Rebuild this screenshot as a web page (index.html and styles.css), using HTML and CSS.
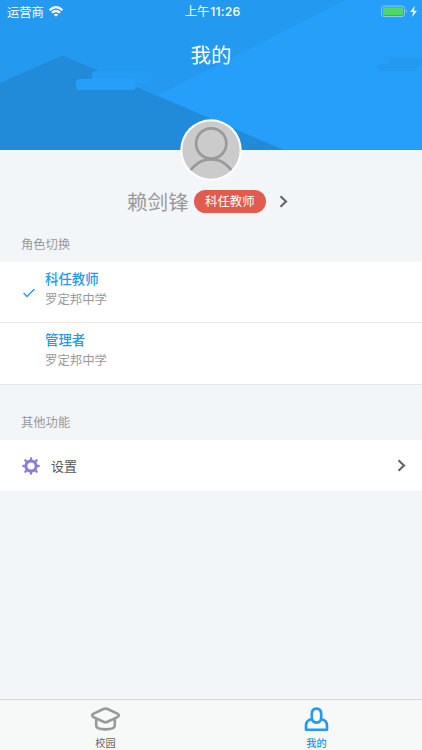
FILE: index.html
```
<!DOCTYPE html>
<html lang="zh-CN">
<head>
<meta charset="utf-8">
<title>我的</title>
<link rel="stylesheet" href="styles.css">
</head>
<body>
<div class="screen">
  <header class="hero">
    <svg class="scenery" viewBox="0 0 422 150" preserveAspectRatio="none" aria-hidden="true">
      <rect width="422" height="150" fill="#2499f0"/>
      <path d="M345 0H422V150H280L158 95Z" fill="#259ff9"/>
      <path d="M0 83L59 57Q62 55 66 57L284 150H0Z" fill="#218bda"/>
      <rect x="92" y="71" width="59" height="12" rx="4" fill="#259cf4"/>
      <rect x="76" y="79" width="60" height="11" rx="4" fill="#259ff9"/>
      <path d="M390 58H422V65H419Q418 71 415 71H380Q377 71 377 68T380 64H389V60Q389 58 390 58Z" fill="#2499f0"/>
    </svg>
    <div class="status">
      <div class="carrier">
        <span>运营商</span>
        <svg width="14" height="11" viewBox="0 0 14 11" fill="none" stroke="#fff" stroke-width="2.2">
          <path d="M.6 4.1Q7-1.7 13.4 4.1"/>
          <path d="M3 6.8Q7 3.2 11 6.8"/>
          <path d="M7 10.8L4.8 8.6Q7 6.8 9.2 8.6Z" fill="#fff" stroke="none"/>
        </svg>
      </div>
      <div class="clock">上午<span>11:26</span></div>
      <svg class="battery" width="37" height="13" viewBox="0 0 37 13">
        <rect x=".5" y="1" width="23" height="10.5" rx="2.5" fill="none" stroke="#8bc9f8"/>
        <rect x="2" y="2.5" width="20" height="7.5" rx="1" fill="#4cd964"/>
        <path d="M25 4.5Q27 6.2 25 8Z" fill="#8bc9f8"/>
        <path d="M33.8 .8L29.2 7H32L31.2 12.2L35.8 5.7H32.9Z" fill="#fff"/>
      </svg>
    </div>
    <h1 class="title">我的</h1>
  </header>

  <section class="profile">
    <svg class="avatar" width="62" height="62" viewBox="0 0 62 62">
      <defs><clipPath id="face"><circle cx="31" cy="31" r="28.5"/></clipPath></defs>
      <circle cx="31" cy="31" r="30.7" fill="#fff"/>
      <circle cx="31" cy="31" r="28.7" fill="#cbcbcb"/>
      <g clip-path="url(#face)" fill="none" stroke="#999" stroke-width="2.7">
        <circle cx="31.2" cy="24.5" r="15.1"/>
        <path d="M8 54.5C15 45 21 40.4 31 40.4S47 45 54 54.5"/>
      </g>
    </svg>
    <div class="identity">
      <span class="name">赖剑锋</span>
      <span class="badge">科任教师</span>
      <svg class="chevron" width="9" height="13" viewBox="0 0 9 13"><path d="M1.5 1.2L7 6.5L1.5 11.8"/></svg>
    </div>
  </section>

  <h2 class="section-title roles-title">角色切换</h2>
  <div class="role">
    <svg class="check" width="12" height="10" viewBox="0 0 12 10"><path d="M.6 5L4 8.5L11.5 1"/></svg>
    <div class="role-text"><strong>科任教师</strong><span>罗定邦中学</span></div>
  </div>
  <div class="role">
    <div class="role-text"><strong>管理者</strong><span>罗定邦中学</span></div>
  </div>

  <h2 class="section-title other-title">其他功能</h2>
  <div class="setting">
    <svg width="18" height="18" viewBox="-9 -9 18 18" fill="none" stroke="#8c7bdb">
      <circle r="5.1" stroke-width="3"/>
      <path stroke-width="2.3" stroke-linecap="round" d="M0-6V-7.7M0 6V7.7M-6 0H-7.7M6 0H7.7M4.3-4.3L5.7-5.7M4.3 4.3L5.7 5.7M-4.3 4.3L-5.7 5.7M-4.3-4.3L-5.7-5.7"/>
    </svg>
    <span>设置</span>
    <svg class="chevron" width="9" height="13" viewBox="0 0 9 13"><path d="M1.5 1.2L7 6.5L1.5 11.8"/></svg>
  </div>

  <nav class="tabs">
    <div class="tab">
      <svg width="30" height="26" viewBox="0 0 30 26" fill="none" stroke="#999" stroke-width="2.6" stroke-linejoin="round">
        <path d="M12.4 2Q14.5 1.2 16.6 2L26.4 6.6Q29.3 8.3 26.4 10.1L16.6 14.7Q14.5 15.6 12.4 14.7L2.6 10.1Q-.3 8.3 2.6 6.6Z"/>
        <path d="M5.2 11.6V18.6Q5.2 22.4 14.5 22.4T23.8 18.6V11.6"/>
      </svg>
      <span>校园</span>
    </div>
    <div class="tab active">
      <svg width="30" height="26" viewBox="0 0 30 26" fill="none" stroke="#2499f0" stroke-width="2.6" stroke-linejoin="round">
        <path d="M14.5 1.6C11.2 1.6 9.8 3.8 9.8 7V10C9.8 13.4 11.5 15.6 14.5 15.6S19.2 13.4 19.2 10V7C19.2 3.8 17.8 1.6 14.5 1.6Z"/>
        <path d="M9.9 12.3C6.1 12.8 4 15.2 4 18.8V22.7H25V18.8C25 15.2 22.9 12.8 19.1 12.3"/>
      </svg>
      <span>我的</span>
    </div>
  </nav>
</div>
</body>
</html>
```
FILE: styles.css
```
* {
  box-sizing: border-box;
}

body {
  margin: 0;
  font-family: "Noto Sans CJK SC", sans-serif;
}

svg {
  display: block;
  flex: none;
}

.screen {
  display: flex;
  flex-direction: column;
  width: 422px;
  height: 750px;
  overflow: hidden;
  background: #f3f6f8;
}

.hero {
  position: relative;
  flex: none;
  height: 150px;
  color: #fff;
}

.scenery {
  position: absolute;
  inset: 0;
  width: 100%;
  height: 100%;
}

.status {
  position: relative;
  display: grid;
  grid-template-columns: 1fr auto 1fr;
  align-items: center;
  height: 22px;
  padding: 0 4px 0 7px;
  font-size: 12.3px;
  line-height: 22px;
}

.carrier {
  display: flex;
  align-items: center;
  gap: 5px;
}

.clock span {
  margin-left: 1px;
  font-family: Inter, sans-serif;
  font-weight: 500;
  letter-spacing: 0.15px;
}

.battery {
  justify-self: end;
}

.title {
  position: relative;
  margin: 16px 0 0;
  font-size: 20.4px;
  font-weight: 400;
  line-height: 32px;
  text-align: center;
}

.profile {
  position: relative;
  flex: none;
  height: 111px;
  margin-top: -31px;
}

.avatar {
  margin: 0 auto;
}

.identity {
  display: flex;
  align-items: center;
  height: 30px;
  margin-top: 5px;
  padding-left: 127px;
}

.name {
  color: #999;
  font-size: 20.6px;
  line-height: 30px;
}

.badge {
  width: 72px;
  height: 23px;
  margin: 0 13px 0 5px;
  border-radius: 12px;
  background: #e15b4e;
  color: #fff;
  font-size: 12.4px;
  line-height: 22px;
  text-align: center;
}

.chevron {
  fill: none;
  stroke: #666;
  stroke-width: 2.2;
}

.section-title {
  flex: none;
  margin: 0;
  padding-left: 21px;
  color: #999;
  font-size: 12.3px;
  font-weight: 400;
  line-height: 18px;
}

.roles-title {
  height: 32px;
  padding-top: 5px;
}

.other-title {
  height: 55px;
  padding-top: 28px;
}

.role {
  display: flex;
  flex: none;
  height: 61px;
  padding-left: 45px;
  border-bottom: 1px solid #e5e8e9;
  background: #fff;
}

.role + .role {
  height: 62px;
}

.check {
  margin: 26px 10px 0 -22px;
  fill: none;
  stroke: #2499f0;
  stroke-width: 1.4;
}

.role-text {
  display: flex;
  flex-direction: column;
  padding-top: 6px;
}

.role-text strong {
  color: #2499f0;
  font-size: 13.4px;
  font-weight: 500;
  line-height: 21px;
}

.role-text span {
  color: #999;
  font-size: 12.4px;
  line-height: 20px;
}

.setting {
  display: flex;
  flex: none;
  align-items: center;
  height: 51px;
  padding: 0 16px 0 22px;
  background: #fff;
  color: #555;
  font-size: 13px;
}

.setting span {
  flex: 1;
  margin: -1px 0 0 11px;
}

.tabs {
  display: flex;
  flex: none;
  height: 51px;
  margin-top: auto;
  border-top: 1px solid #d4d7d9;
  background: #f7f8f8;
}

.tab {
  display: flex;
  flex: 1;
  flex-direction: column;
  align-items: center;
  padding-top: 7px;
  color: #666;
  font-size: 10.2px;
  line-height: 15px;
}

.tab span {
  margin-top: 2px;
}

.tab.active {
  color: #2499f0;
  font-weight: 500;
}
```
